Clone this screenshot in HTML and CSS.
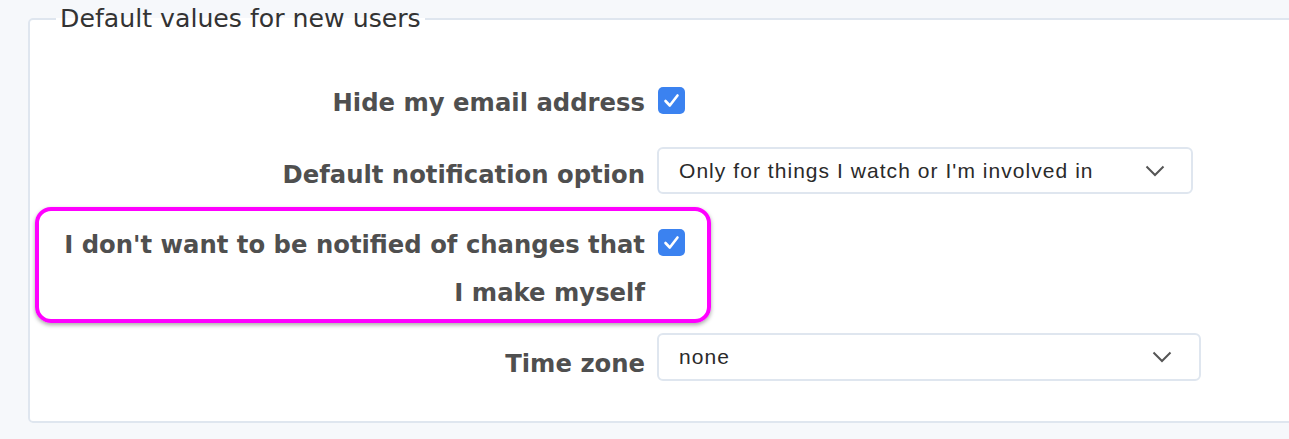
FILE: index.html
```html
<!DOCTYPE html>
<html lang="en">
<head>
    <meta charset="UTF-8">
    <title>User settings</title>
    <link rel="stylesheet" href="styles.css">
</head>
<body>

    <!-- Defaults for new users -->
    <fieldset class="defaults">
        <legend>Default values for new users</legend>

        <div class="row row-check">
            <label for="hideMail">Hide my email address</label>
            <span class="check"><input type="checkbox" id="hideMail" checked>
                <svg viewBox="0 0 27 27"><path d="M7.5 14 L11.8 18.5 L19.5 8.5"/></svg>
            </span>
        </div>

        <div class="row row-select">
            <label for="notify">Default notification option</label>
            <div class="select select-notify" id="notify">
                <span>Only for things I watch or I'm involved in</span>
                <svg viewBox="0 0 20 12"><path d="M1.5 1.5 L10 10 L18.5 1.5"/></svg>
            </div>
        </div>

        <div class="row row-check row-tall">
            <label for="noSelf">I don't want to be notified of changes that<br>I make myself</label>
            <span class="check"><input type="checkbox" id="noSelf" checked>
                <svg viewBox="0 0 27 27"><path d="M7.5 14 L11.8 18.5 L19.5 8.5"/></svg>
            </span>
            <!-- highlight annotation -->
            <div class="highlight"></div>
        </div>

        <div class="row row-select row-tz">
            <label for="tz">Time zone</label>
            <div class="select select-tz" id="tz">
                <span>none</span>
                <svg viewBox="0 0 20 12"><path d="M1.5 1.5 L10 10 L18.5 1.5"/></svg>
            </div>
        </div>
    </fieldset>

</body>
</html>
```

FILE: styles.css
```css
/* Basic reset */
* {
    margin: 0;
    padding: 0;
    box-sizing: border-box;
}

body {
    font-family: "DejaVu Sans", Verdana, sans-serif;
    background: #f6f8fb;
    overflow: hidden;
    padding-top: 4px;
}

/* Fieldset box */
.defaults {
    margin-left: 28px;
    width: 1300px;
    height: 419px;
    background: #fff;
    border: 2px solid #dfe6ef;
    border-radius: 5px;
    padding: 45px 0 0 0;
}

.defaults legend {
    margin-left: 26px;
    padding: 0 4px;
    font-size: 25.2px;
    line-height: 30px;
    color: #333;
}

/* Form rows */
.row {
    display: flex;
    align-items: flex-start;
    gap: 12px;
    position: relative;
}

.row label {
    width: 615px;
    flex-shrink: 0;
    text-align: right;
    font-weight: bold;
    font-size: 24.3px;
    line-height: 48px;
    color: #4f4f4f;
}

.row-check {
    margin-bottom: 20px;
}

.row-select {
    margin-bottom: 22px;
}

.row-select label {
    padding-top: 4px;
}

.row-tz label {
    padding-top: 7px;
}

.row-tall {
    margin-bottom: 16px;
}

/* Checkbox */
.check {
    position: relative;
    width: 27px;
    height: 27px;
    margin-top: 8px;
    margin-left: 1px;
    background: #3b82f0;
    border-radius: 5px;
}

.check input {
    display: none;
}

.check svg {
    width: 27px;
    height: 27px;
    display: block;
}

.check path {
    fill: none;
    stroke: #fff;
    stroke-width: 2.6;
    stroke-linecap: round;
    stroke-linejoin: round;
}

/* Select boxes */
.select {
    display: flex;
    align-items: center;
    justify-content: space-between;
    height: 47px;
    padding: 0 26px 0 20px;
    border: 2px solid #dfe6ef;
    border-radius: 6px;
    font-family: "Liberation Sans", Arial, sans-serif;
    font-size: 21px;
    letter-spacing: 1.05px;
    color: #2a2a2a;
}

.select-notify {
    width: 536px;
}

.select-tz {
    width: 544px;
    height: 48px;
    padding-right: 27px;
}

.select svg {
    width: 20px;
    height: 12px;
}

.select path {
    fill: none;
    stroke: #555;
    stroke-width: 2;
}

/* Magenta annotation around the row */
.highlight {
    position: absolute;
    left: 5px;
    top: -14px;
    width: 676px;
    height: 116px;
    border: 4px solid #ff00ff;
    border-radius: 16px;
    box-shadow: 0 2px 4px rgba(0, 0, 0, 0.35);
    pointer-events: none;
}
```
